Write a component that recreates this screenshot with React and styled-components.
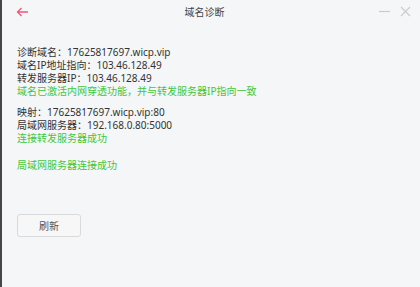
import styled, { createGlobalStyle } from 'styled-components';

const GlobalStyle = createGlobalStyle`
  html, body { margin: 0; padding: 0; height: 100%; }
  body { background: #f5f6f8; }
  #root { height: 100%; }
`;

function App() {
  return (
    <>
      <GlobalStyle />
      <Window>
        <TitleBar>
          <BackButton aria-label="back">
            <svg width="13" height="10" viewBox="0 0 13 10">
              <path d="M12 5H1.5M5.5 1L1.5 5l4 4" fill="none" stroke="#f0557a" strokeWidth="1.3" />
            </svg>
          </BackButton>
          <Title>域名诊断</Title>
          <WinControls>
            <svg width="11" height="11" viewBox="0 0 11 11">
              <path d="M0 5.5h11" stroke="#c9cbd0" strokeWidth="1.2" />
            </svg>
            <svg width="11" height="11" viewBox="0 0 11 11">
              <path d="M1 1l9 9M10 1l-9 9" stroke="#c9cbd0" strokeWidth="1.1" />
            </svg>
          </WinControls>
        </TitleBar>

        <Content>
          <Block $gap={8}>
            <Line>诊断域名：17625817697.wicp.vip</Line>
            <Line>域名IP地址指向：103.46.128.49</Line>
            <Line>转发服务器IP：103.46.128.49</Line>
            <Line $ok>域名已激活内网穿透功能，并与转发服务器IP指向一致</Line>
          </Block>
          <Block $gap={14}>
            <Line>映射：17625817697.wicp.vip:80</Line>
            <Line>局域网服务器：192.168.0.80:5000</Line>
            <Line $ok>连接转发服务器成功</Line>
          </Block>
          <Block>
            <Line $ok>局域网服务器连接成功</Line>
          </Block>
          <RefreshButton>刷新</RefreshButton>
        </Content>
      </Window>
    </>
  );
}

const Window = styled.div`
  height: 100%;
  box-sizing: border-box;
  border-left: 2px solid #45464a;
  background: #f5f6f8;
  font-family: 'Noto Sans', 'Noto Sans CJK SC', sans-serif;
`;
const TitleBar = styled.div`
  height: 22px;
  display: grid;
  grid-template-columns: 1fr auto 1fr;
  align-items: center;
  padding: 0 9px 0 14px;
`;
const BackButton = styled.div`
  display: flex;
  align-items: center;
  padding-top: 1px;
`;
const Title = styled.div`
  font-size: 10px;
  color: #444;
  margin-right: 18px;
`;
const WinControls = styled.div`
  display: flex;
  justify-content: flex-end;
  gap: 10px;
`;
const Content = styled.div`
  padding: 24px 0 0 15px;
  display: flex;
  flex-direction: column;
  align-items: flex-start;
`;
const Block = styled.div`
  margin-bottom: ${(p) => p.$gap ?? 0}px;
`;
const Line = styled.div`
  font-size: 10px;
  line-height: 13px;
  color: ${(p) => (p.$ok ? '#3ec73e' : '#333')};
  white-space: nowrap;
`;
const RefreshButton = styled.button`
  margin-top: 42px;
  width: 64px;
  height: 23px;
  border: 1px solid #d9dadc;
  border-radius: 3px;
  background: #f7f7f8;
  font-family: inherit;
  font-size: 10px;
  color: #555;
  padding: 0;
`;

export default App;
